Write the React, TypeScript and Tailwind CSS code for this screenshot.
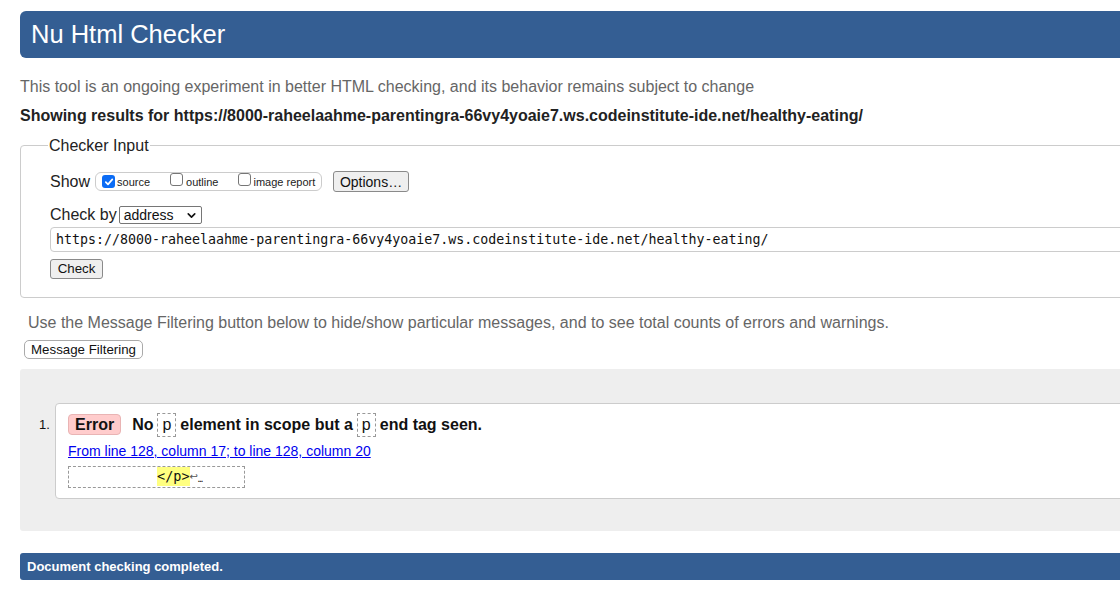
import { ChevronDown } from 'lucide-react';

function Checkbox({ checked }: { checked?: boolean }) {
  if (checked) {
    return (
      <span className="inline-flex h-[13px] w-[13px] items-center justify-center rounded-[3px] bg-[#0b6cf5]">
        <svg width="10" height="10" viewBox="0 0 10 10" fill="none">
          <path d="M1.8 5.2 L4 7.4 L8.3 2.4" stroke="white" strokeWidth="1.7" strokeLinecap="round" strokeLinejoin="round" />
        </svg>
      </span>
    );
  }
  return <span className="inline-block h-[13px] w-[13px] rounded-[3px] border border-[#767676] bg-white" />;
}

function Code({ children }: { children: string }) {
  return (
    <span className="mx-[4px] inline-block border border-dashed border-[#999] px-[4px] py-[2px] font-normal leading-[18px]">
      {children}
    </span>
  );
}

export default function App() {
  const mono = "font-['DejaVu_Sans_Mono','Liberation_Mono',monospace]";
  return (
    <div className="h-[595px] w-[1120px] overflow-hidden bg-white font-['Liberation_Sans',Arial,sans-serif] text-[#111]">
      <div className="w-[1240px] pl-5">
        <h1 className="mt-[11px] h-[47px] rounded-l-[6px] bg-[#345e93] pl-[11px] text-[25.5px] leading-[47px] font-normal text-white">
          Nu Html Checker
        </h1>
        <p className="mt-[19px] text-[16px] leading-[19px] text-[#666]">
          This tool is an ongoing experiment in better HTML checking, and its behavior remains subject to change
        </p>
        <p className="mt-[10px] text-[16px] font-bold leading-[19px] text-[#222]">
          Showing results for https://8000-raheelaahme-parentingra-66vy4yoaie7.ws.codeinstitute-ide.net/healthy-eating/
        </p>

        <fieldset className="mt-[11px] rounded-[4px] border border-[#ccc] pb-[17px] pl-[29px]">
          <legend className="-ml-[2px] px-[1px] text-[16px] leading-[19px] text-[#222]">Checker Input</legend>
          <div className="mt-[16px] flex h-[21px] items-center">
            <span className="text-[16px] text-[#222]">Show</span>
            <div className="ml-[5px] flex h-[19px] w-[227px] items-center rounded-[6px] border border-[#ccc] pl-[6px] text-[11px] text-[#222]">
              <Checkbox checked />
              <span className="ml-[2px] mt-[2px]">source</span>
              <span className="ml-[20px]"><Checkbox /></span>
              <span className="ml-[3px] mt-[2px]">outline</span>
              <span className="ml-[20px]"><Checkbox /></span>
              <span className="ml-[2px] mt-[2px]">image report</span>
            </div>
            <button className="ml-[11px] h-[21px] w-[76px] rounded-[3px] border border-[#8a8a8a] bg-[#efefef] text-[14px] text-[#111]">
              Options…
            </button>
          </div>
          <div className="mt-[14px] flex h-[18px] items-center">
            <span className="text-[16px] text-[#222]">Check by</span>
            <div className="ml-[2px] flex h-[18px] w-[83px] items-center justify-between rounded-[2px] border border-[#767676] pl-[4px] pr-[3px] text-[14px]">
              <span>address</span>
              <ChevronDown size={13} strokeWidth={3} />
            </div>
          </div>
          <div className={`mt-[3px] flex h-[25px] items-center rounded-l-[4px] border border-[#ccc] pl-[5px] text-[13.3px] ${mono}`}>
            https://8000-raheelaahme-parentingra-66vy4yoaie7.ws.codeinstitute-ide.net/healthy-eating/
          </div>
          <button className="mt-[7px] h-[20px] w-[53px] rounded-[3px] border border-[#8a8a8a] bg-[#efefef] text-[13.3px] leading-[18px]">
            Check
          </button>
        </fieldset>

        <p className="ml-[8px] mt-[15px] text-[16px] leading-[19px] text-[#666]">
          Use the Message Filtering button below to hide/show particular messages, and to see total counts of errors and warnings.
        </p>
        <button className="ml-[4px] mt-[8px] h-[19px] w-[119px] rounded-[5px] border border-[#aaa] bg-white text-[13.3px] leading-[16px]">
          Message Filtering
        </button>

        <div className="mt-[8px] rounded-l-[3px] bg-[#eeeeee] pb-[32px] pl-[19px] pt-[34px]">
          <ol className="flex items-start">
            <span className="w-[16px] pt-[14px] text-[13px] leading-[16px]">1.</span>
            <li className="flex-1 rounded-l-[4px] border border-[#ccc] bg-white pb-[10px] pl-[12px] pt-[9px]">
              <div className="flex items-center text-[16px] font-bold">
                <span className="rounded-[4px] border border-[#e9b4b4] bg-[#ffcccc] px-[6px] leading-[19px]">Error</span>
                <span className="ml-[11px]">No</span>
                <Code>p</Code>
                <span>element in scope but a</span>
                <Code>p</Code>
                <span>end tag seen.</span>
              </div>
              <a className="mt-[6px] block text-[14px] leading-[17px] text-[#0000ee] underline" href="#">
                From line 128, column 17; to line 128, column 20
              </a>
              <div className={`mt-[6px] flex h-[22px] w-[177px] items-center border border-dashed border-[#999] pl-[88px] text-[13.5px] ${mono}`}>
                <span className="bg-[#ffff80] leading-[19px]">&lt;/p&gt;</span>
                <span className="font-['DejaVu_Sans',sans-serif] text-[10px] text-[#555]">↩</span>
                <span className="mt-[7px] text-[8px] leading-none">…</span>
              </div>
            </li>
          </ol>
        </div>

        <div className="mt-[22px] h-[27px] rounded-l-[3px] bg-[#345e93] pl-[7px] text-[13px] font-bold leading-[27px] text-white">
          Document checking completed.
        </div>
      </div>
    </div>
  );
}
